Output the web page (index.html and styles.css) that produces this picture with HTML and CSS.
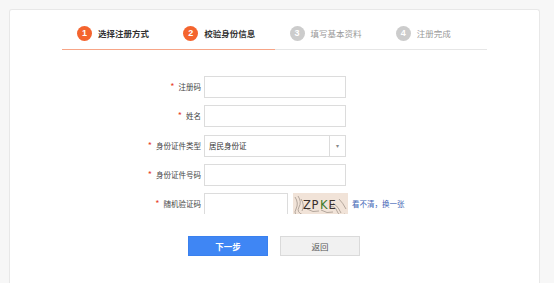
FILE: index.html
```html
<!DOCTYPE html>
<html lang="zh">
<head>
<meta charset="utf-8">
<title>校验身份信息</title>
<link rel="stylesheet" href="styles.css">
</head>
<body>
<div class="card">
  <div class="steps">
    <div class="step done"><span class="num">1</span><span class="txt">选择注册方式</span></div>
    <div class="step done"><span class="num">2</span><span class="txt">校验身份信息</span></div>
    <div class="step"><span class="num">3</span><span class="txt">填写基本资料</span></div>
    <div class="step"><span class="num">4</span><span class="txt">注册完成</span></div>
  </div>
  <form class="form">
    <div class="row">
      <label class="label"><i class="star">*</i>注册码</label>
      <input class="input" type="text">
    </div>
    <div class="row">
      <label class="label"><i class="star">*</i>姓名</label>
      <input class="input" type="text">
    </div>
    <div class="row">
      <label class="label"><i class="star">*</i>身份证件类型</label>
      <div class="select"><span class="sel-text">居民身份证</span><span class="sel-arrow">▾</span></div>
    </div>
    <div class="row">
      <label class="label"><i class="star">*</i>身份证件号码</label>
      <input class="input" type="text">
    </div>
    <div class="row row-clip">
      <label class="label"><i class="star">*</i>随机验证码</label>
      <input class="input input-short" type="text">
      <svg class="captcha" width="55" height="22" viewBox="0 0 55 22">
        <rect width="55" height="22" fill="#f1e3d8"/>
        <g fill="none" stroke="#8a7d74" stroke-width="0.6">
          <path d="M2 4 Q6 10 3 16 T6 22"/>
          <path d="M5 3 Q9 9 6 14 T10 22"/>
          <path d="M8 6 Q12 12 9 18"/>
          <path d="M36 14 Q42 12 44 18 T52 21"/>
          <path d="M40 10 Q46 14 48 20"/>
          <path d="M46 6 Q50 10 53 16"/>
          <path d="M14 16 Q20 20 26 18"/>
          <path d="M28 17 Q34 21 40 19"/>
        </g>
        <text x="10" y="16" class="cap-t">Z</text>
        <text x="18.5" y="16" class="cap-t">P</text>
        <text x="27" y="16" class="cap-t cap-g">K</text>
        <text x="35.5" y="16" class="cap-t">E</text>
      </svg>
      <a class="refresh" href="#">看不清，换一张</a>
    </div>
    <div class="actions">
      <button class="btn btn-primary" type="button">下一步</button>
      <button class="btn btn-default" type="button">返回</button>
    </div>
  </form>
</div>
</body>
</html>
```
FILE: styles.css
```css
* { box-sizing: border-box; }
html, body { margin: 0; padding: 0; }
body {
  background: #f7f7f7;
  font-family: "Noto Sans CJK SC", "Noto Sans", sans-serif;
  color: #555;
  height: 283px;
  overflow: hidden;
}
.card {
  margin: 9px 0 0 9px;
  width: 531px;
  height: 274px;
  background: #fff;
  border: 1px solid #e8e8e8;
  border-bottom: 0;
  border-radius: 3px 3px 0 0;
}
.steps {
  display: flex;
  margin: 16px 0 0 52px;
  width: 425px;
}
.step {
  flex: 1;
  display: flex;
  align-items: center;
  padding: 0 0 8px 15px;
  border-bottom: 1px solid #e6e6e6;
}
.step.done { border-bottom-color: #f7a587; }
.num {
  width: 15px;
  height: 15px;
  border-radius: 50%;
  background: #cccccc;
  color: #fff;
  font-size: 9px;
  font-weight: 700;
  line-height: 15px;
  text-align: center;
  font-family: "Liberation Sans", Arial, sans-serif;
}
.txt {
  margin-left: 6px;
  font-size: 8.5px;
  color: #999;
  line-height: 15px;
}
.step.done .num { background: #f4642e; }
.step.done .txt { color: #333; font-weight: 700; }

.form {
  margin-top: 26px;
  display: flex;
  flex-direction: column;
  gap: 7.25px;
}
.row {
  display: flex;
  align-items: center;
  height: 22px;
}
.row-clip { height: 21px; overflow: hidden; align-items: flex-start; }
.row-clip .label { line-height: 21px; }
.label {
  width: 191px;
  margin-right: 3px;
  text-align: right;
  font-size: 7.5px;
  color: #444;
  line-height: 22px;
}
.star {
  font-style: normal;
  color: #e8412c;
  margin-right: 4px;
  font-size: 9px;
}
.input {
  width: 142px;
  height: 22px;
  border: 1px solid #dcdcdc;
  background: #fff;
  padding: 0 4px;
  font-size: 7.5px;
  outline: none;
}
.input-short { width: 84px; }
.select {
  width: 142px;
  height: 22px;
  border: 1px solid #dcdcdc;
  display: flex;
  align-items: center;
}
.sel-text {
  flex: 1;
  padding-left: 4px;
  font-size: 7.5px;
  color: #333;
}
.sel-arrow {
  width: 16px;
  height: 100%;
  border-left: 1px solid #dcdcdc;
  color: #888;
  font-size: 6px;
  line-height: 20px;
  text-align: center;
}
.captcha {
  display: block;
  margin-left: 5px;
  flex: none;
}
.cap-t {
  font-family: "DejaVu Sans", sans-serif;
  font-size: 11.5px;
  fill: #3a302c;
}
.cap-g { fill: #3c7a2c; }
.refresh {
  margin-left: 4px;
  font-size: 7.5px;
  color: #3f65b5;
  text-decoration: none;
  line-height: 21px;
}
.actions {
  display: flex;
  gap: 12px;
  margin: 15px 0 0 178px;
}
.btn {
  width: 80px;
  height: 20px;
  font-family: "Noto Sans CJK SC", sans-serif;
  font-size: 8.5px;
  padding: 0;
  cursor: pointer;
}
.btn-primary {
  background: #3f86f4;
  border: 1px solid #3a80ee;
  color: #fff;
  font-weight: 700;
}
.btn-default {
  background: #f1f1f1;
  border: 1px solid #dadada;
  color: #555;
}
```
